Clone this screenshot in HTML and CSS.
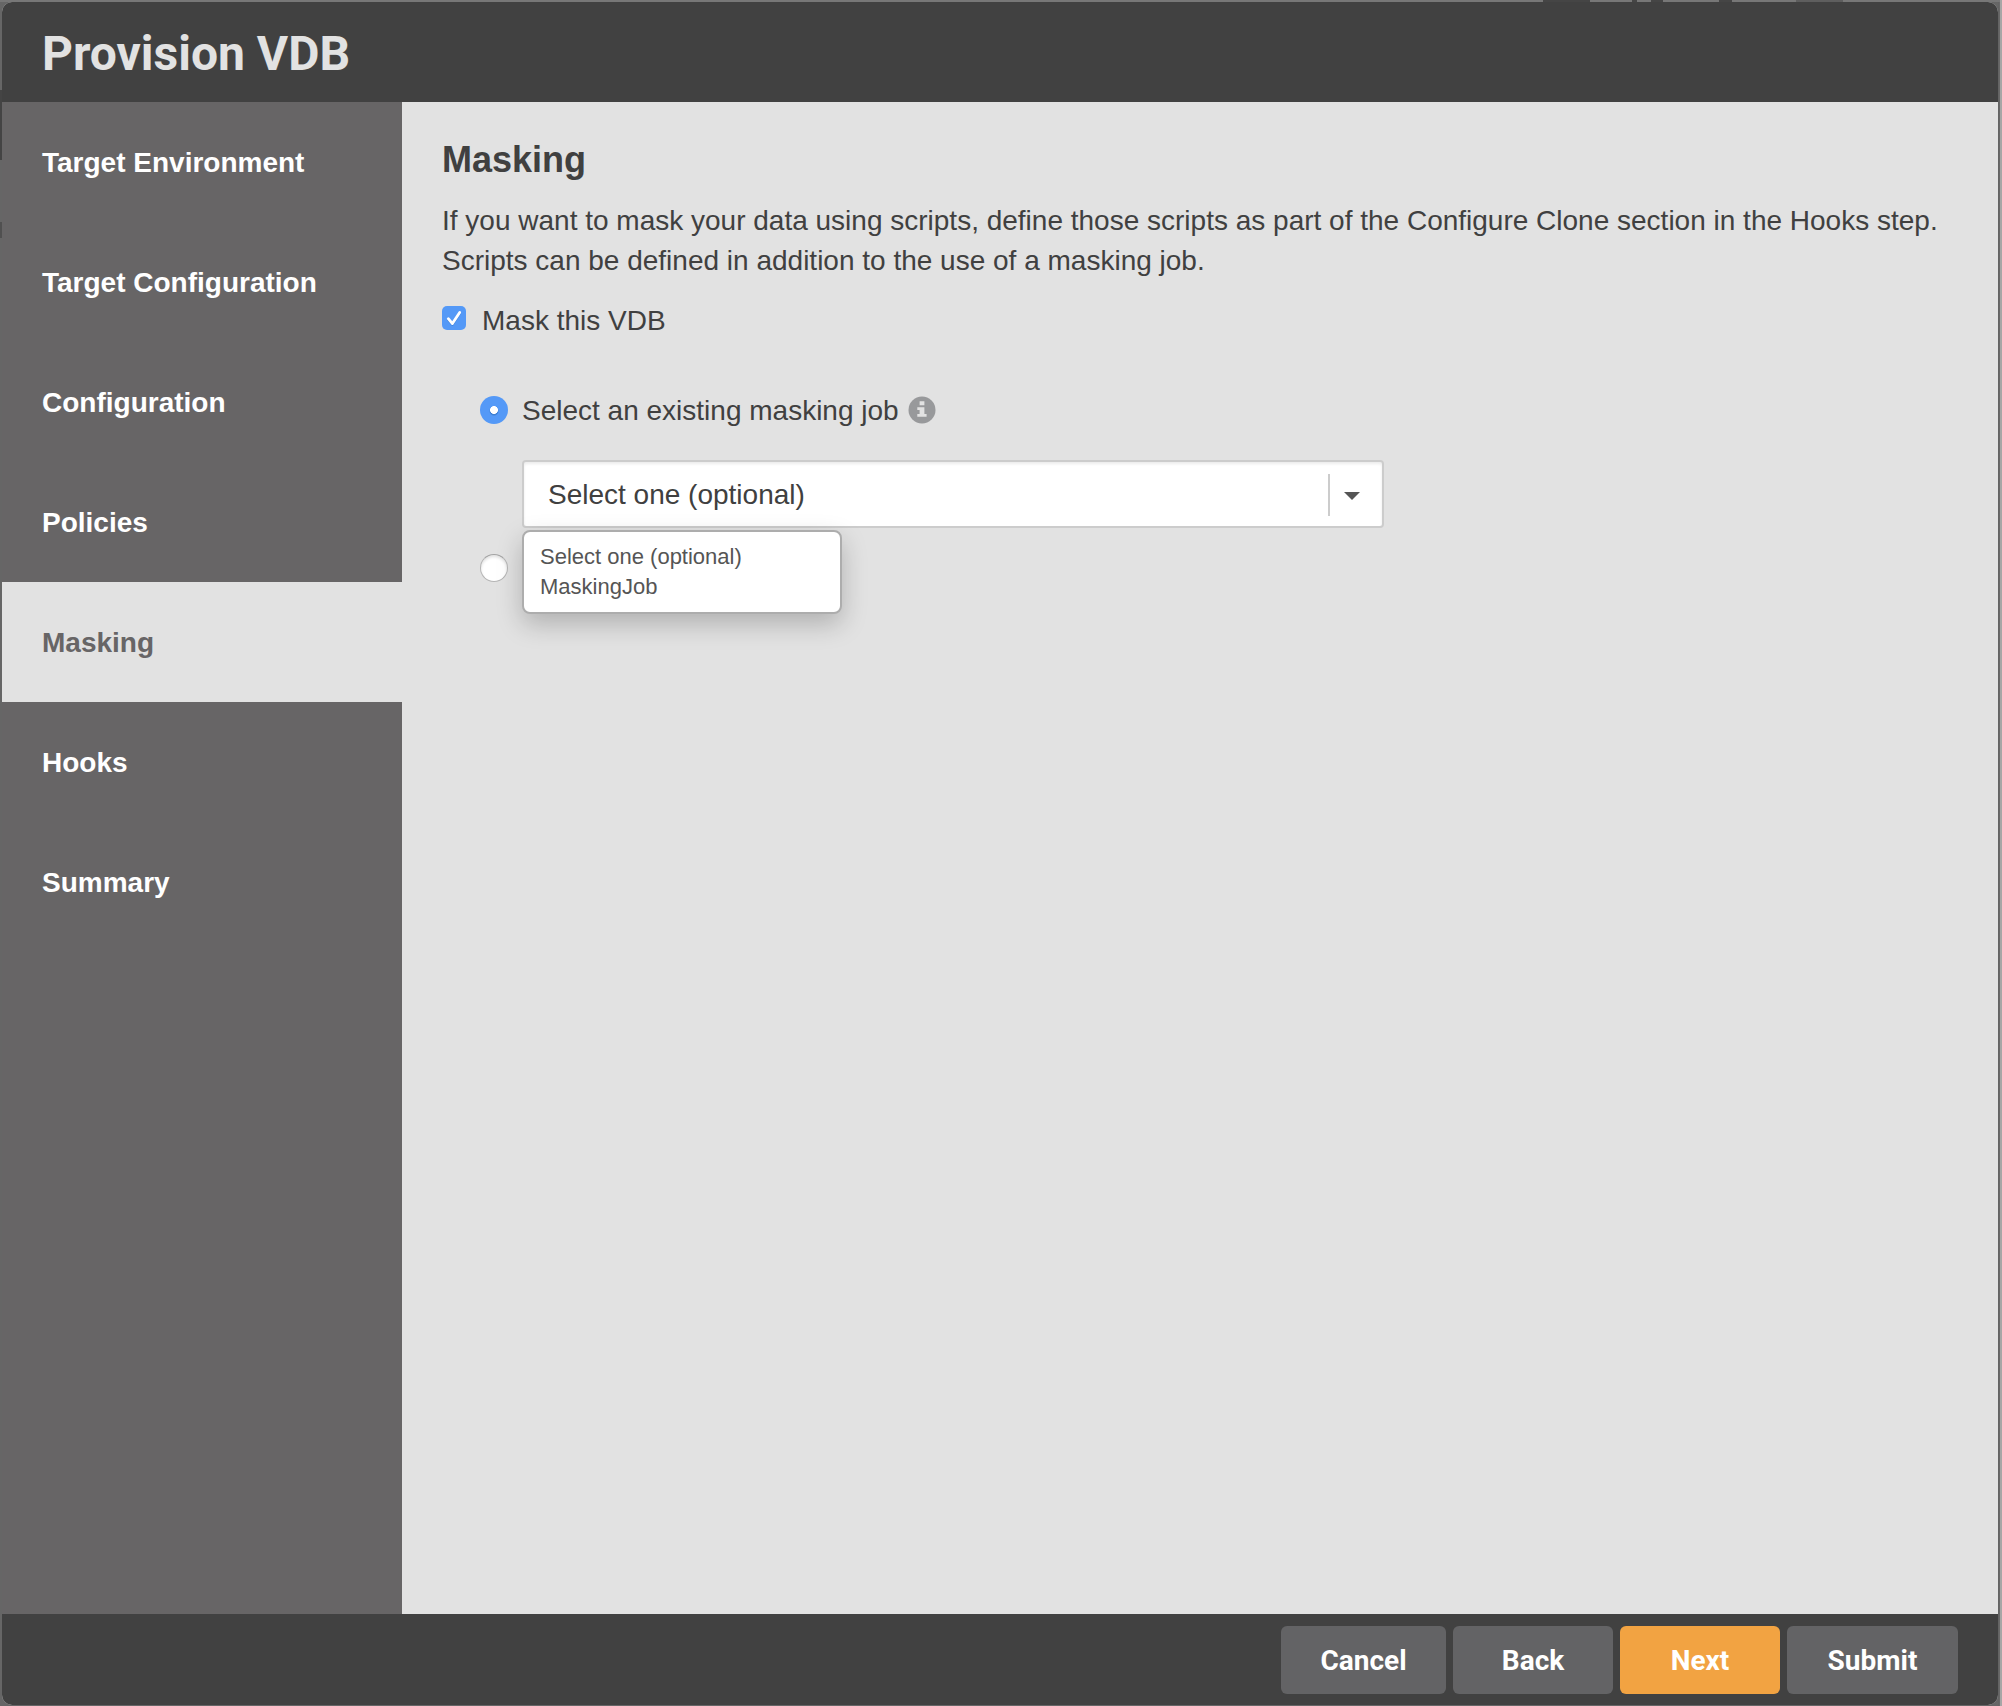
FILE: index.html
```html
<!DOCTYPE html>
<html lang="en">
<head>
<meta charset="utf-8">
<title>Provision VDB</title>
<link rel="stylesheet" href="styles.css">
</head>
<body>
<div class="backdrop-marks" aria-hidden="true">
  <i class="mark mark-a"></i><i class="mark mark-b"></i><i class="mark mark-c"></i><i class="mark mark-d"></i><i class="mark mark-e"></i>
  <i class="mark mark-f"></i><i class="mark mark-g"></i>
</div>
<div class="dialog">
  <header class="dialog-header"><h1 class="dialog-title">Provision VDB</h1></header>
  <div class="dialog-body">
    <nav class="steps">
      <a class="step">Target Environment</a>
      <a class="step">Target Configuration</a>
      <a class="step">Configuration</a>
      <a class="step">Policies</a>
      <a class="step step-active">Masking</a>
      <a class="step">Hooks</a>
      <a class="step">Summary</a>
    </nav>
    <main class="content">
      <h2 class="content-title">Masking</h2>
      <p class="description">If you want to mask your data using scripts, define those scripts as part of the Configure Clone section in the Hooks step.<br>Scripts can be defined in addition to the use of a masking job.</p>
      <div class="check-row">
        <svg class="checkbox" width="24" height="24" viewBox="0 0 24 24"><rect width="24" height="24" rx="5" fill="#5499f7"/><path d="M6.3 12.7 L10.4 17.6 L17.7 6.4" fill="none" stroke="#3f83dd" stroke-width="2.8" stroke-linecap="round" stroke-linejoin="round" transform="translate(0 .8)"/><path d="M6.3 12.7 L10.4 17.6 L17.7 6.4" fill="none" stroke="#fff" stroke-width="2.8" stroke-linecap="round" stroke-linejoin="round"/></svg>
        <span class="row-label">Mask this VDB</span>
      </div>
      <div class="radio-row">
        <span class="radio radio-on"></span>
        <span class="row-label">Select an existing masking job</span>
        <svg class="info" width="28" height="28" viewBox="0 0 28 28"><circle cx="14" cy="14" r="13.5" fill="#98999b"/><path d="M11.6 5.2h4.8v4.1h-4.8z M9.3 11.2h7.1v6.9h2.2v2.7H9.3v-2.7h2.3v-4.2H9.3z" fill="#e2e2e2"/></svg>
      </div>
      <div class="select">
        <span class="select-value">Select one (optional)</span>
        <span class="select-toggle"><svg width="16" height="8" viewBox="0 0 16 8"><path d="M0 0H16L8 8z" fill="#555"/></svg></span>
        <ul class="menu">
          <li>Select one (optional)</li>
          <li>MaskingJob</li>
        </ul>
      </div>
      <div class="radio-row radio-row-second"><span class="radio"></span></div>
    </main>
  </div>
  <footer class="dialog-footer">
    <button class="button button-cancel">Cancel</button>
    <button class="button">Back</button>
    <button class="button button-primary">Next</button>
    <button class="button button-submit">Submit</button>
  </footer>
</div>
</body>
</html>
```
FILE: styles.css
```css
* { box-sizing: border-box; }
html, body { height: 100%; margin: 0; }
body {
  padding: 2px 4px 1px 2px;
  overflow: hidden;
  background: linear-gradient(90deg, #666 0, #666 1998px, #626262 1998px, #6a6a6a 2000px, #a6a6a6 2000px);
  font-family: "Liberation Sans", Arial, sans-serif;
  font-size: 28px;
  color: #404040;
}
.backdrop-marks { position: absolute; top: 0; left: 0; width: 2000px; height: 2px; background: #777; }
.mark { position: absolute; top: 0; height: 2px; background: #454545; }
.mark-a { left: 1543px; width: 47px; }
.mark-b { left: 1632px; width: 5px; }
.mark-c { left: 1651px; width: 12px; }
.mark-d { left: 1719px; width: 13px; }
.mark-e { left: 1796px; width: 47px; background: #5e5e5e; }
.mark-f { left: 0; top: 90px; width: 2px; height: 70px; background: #444; }
.mark-g { left: 0; top: 222px; width: 2px; height: 16px; background: #505050; }
.dialog {
  position: relative;
  display: flex;
  flex-direction: column;
  height: 100%;
  overflow: hidden;
  border-radius: 10px;
  background: #e2e2e2;
}
.dialog-header {
  display: flex;
  align-items: center;
  flex: 0 0 100px;
  padding: 4px 0 0 40px;
  background: #414141;
}
.dialog-title {
  margin: 0;
  font: bold 48px/56px Roboto, sans-serif;
  color: #e2e2e2;
}
.dialog-body { display: flex; flex: 1; min-height: 0; }
.steps { flex: 0 0 400px; background: #676566; }
.step {
  display: flex;
  align-items: center;
  height: 120px;
  padding: 2px 0 0 40px;
  font-weight: bold;
  color: #fff;
}
.step-active { background: #e2e2e2; color: #676566; }
.content { flex: 1; padding: 36px 40px 0; }
.content-title { margin: 0; font-size: 36px; line-height: 44px; }
.description { margin: 19px 0 0; line-height: 40px; white-space: nowrap; }
.check-row { display: flex; align-items: center; gap: 16px; height: 40px; margin-top: 19px; }
.row-label { padding-top: 2px; }
.checkbox { margin-top: -4px; }
.radio-row { display: flex; align-items: center; height: 40px; margin: 50px 0 0 38px; gap: 14px; }
.radio {
  flex: none;
  width: 28px;
  height: 28px;
  border: 1px solid #b4b4b4;
  border-top-color: #a2a2a2;
  border-radius: 50%;
  background: #fff;
  box-shadow: inset 0 2px 3px rgba(0, 0, 0, .12);
}
.radio-on {
  border: 0;
  background: radial-gradient(circle at 50% 50%, #fff 3.6px, transparent 4.3px), radial-gradient(circle at 50% 54%, #3d7ed2 3.6px, #5499f7 5px);
  box-shadow: none;
}
.info { margin-left: -4.5px; }
.select {
  position: relative;
  display: flex;
  align-items: center;
  width: 862px;
  height: 68px;
  margin: 30px 0 0 80px;
  border: 2px solid #ccc;
  border-radius: 4px;
  background: #fff;
  box-shadow: inset 0 2px 3px rgba(0, 0, 0, .08);
}
.select-value { flex: 1; padding: 2px 0 0 24px; }
.select-toggle {
  display: flex;
  align-items: center;
  width: 54px;
  height: 42px;
  margin-top: 2px;
  padding: 2px 0 0 14px;
  border-left: 2px solid #ccc;
}
.menu {
  position: absolute;
  top: 68px;
  left: -2px;
  width: 320px;
  height: 84px;
  margin: 0;
  padding: 10px 16px;
  border: 2px solid #adadad;
  border-radius: 8px;
  background: #fff;
  box-shadow: 0 10px 26px rgba(0, 0, 0, .22);
  list-style: none;
  font-size: 22px;
  line-height: 30px;
  color: #555;
}
.radio-row-second { margin-top: 20px; }
.dialog-footer {
  display: flex;
  justify-content: flex-end;
  gap: 7px;
  flex: 0 0 91px;
  padding: 12px 40px 0 0;
  background: #414141;
}
.button {
  width: 160px;
  height: 68px;
  padding: 2px 0 0;
  border: 0;
  border-radius: 6px;
  background: #636365;
  font: bold 28px/32px Roboto, sans-serif;
  color: #fff;
}
.button-cancel { width: 165px; }
.button-submit { width: 171px; }
.button-primary { background: #f2a342; }
```
